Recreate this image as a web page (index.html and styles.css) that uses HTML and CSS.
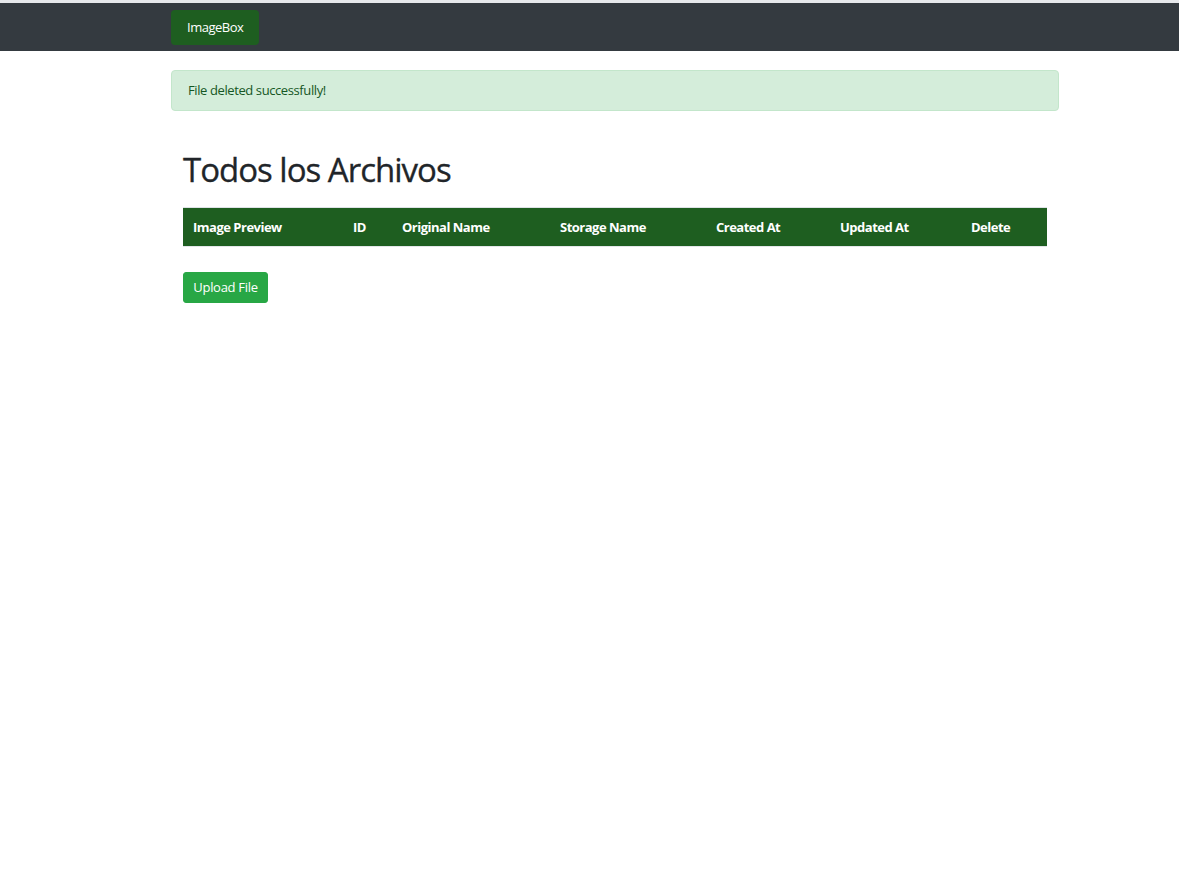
FILE: index.html
```html
<!DOCTYPE html>
<html lang="es">
<head>
<meta charset="utf-8">
<title>ImageBox</title>
<link rel="stylesheet" href="styles.css">
</head>
<body>
<nav class="navbar">
  <div class="container">
    <a class="brand" href="#">ImageBox</a>
  </div>
</nav>
<div class="container">
  <div class="alert">File deleted successfully!</div>
  <main class="content">
    <h1 class="title">Todos los Archivos</h1>
    <table class="files">
      <thead>
        <tr>
          <th class="c-prev">Image Preview</th>
          <th class="c-id">ID</th>
          <th class="c-orig">Original Name</th>
          <th class="c-store">Storage Name</th>
          <th class="c-created">Created At</th>
          <th class="c-updated">Updated At</th>
          <th class="c-del">Delete</th>
        </tr>
      </thead>
      <tbody></tbody>
    </table>
    <a class="btn-upload" href="#">Upload File</a>
  </main>
</div>
</body>
</html>
```
FILE: styles.css
```css
html, body {
  margin: 0;
  padding: 0;
}
body {
  border-top: 3px solid #e6e8eb;
  background: #fff;
  font-family: "Open Sans", "Noto Sans", Arial, sans-serif;
  font-size: 14px;
  color: #212529;
}
.container {
  margin: 0 120px 0 171px;
}
.navbar {
  background: #343a40;
  height: 48px;
}
.navbar .container {
  height: 100%;
  display: flex;
  align-items: center;
}
.brand {
  display: inline-block;
  background: #1e5e20;
  color: #fff;
  text-decoration: none;
  height: 35px;
  line-height: 35px;
  padding: 0 16px;
  width: 56px;
  border-radius: 4px;
  font-size: 13px;
  letter-spacing: -0.5px;
}
.alert {
  margin-top: 19px;
  background: #d4edda;
  border: 1px solid #c3e6cb;
  border-radius: 4px;
  color: #155724;
  padding: 9px 16px;
  line-height: 21px;
  font-size: 13px;
  letter-spacing: -0.4px;
}
.content {
  padding: 0 12px;
}
.title {
  margin: 37px 0 16px;
  font-size: 33px;
  font-weight: 500;
  line-height: 43px;
  letter-spacing: -1px;
  color: #212529;
  -webkit-text-stroke: 0.3px #212529;
}
.files {
  width: 864px;
  border-collapse: collapse;
  table-layout: fixed;
}
.files th {
  background: #1e5e20;
  color: #fff;
  text-align: left;
  font-weight: 700;
  font-size: 13px;
  letter-spacing: -0.5px;
  height: 38px;
  padding: 0 0 0 10px;
  border-top: 1px solid #dee2e6;
  border-bottom: 1px solid #e3e6e9;
}
.c-prev { width: 150px; }
.c-id { width: 39px; }
.c-orig { width: 148px; }
.c-store { width: 146px; }
.c-created { width: 114px; }
.c-updated { width: 121px; }
.c-del { width: 76px; }
.btn-upload {
  display: inline-block;
  margin-top: 25px;
  background: #28a745;
  color: #fff;
  text-decoration: none;
  border: 1px solid #28a745;
  border-radius: 3px;
  padding: 4px 0;
  width: 83px;
  text-align: center;
  line-height: 21px;
  font-size: 13px;
  letter-spacing: -0.3px;
}
```
